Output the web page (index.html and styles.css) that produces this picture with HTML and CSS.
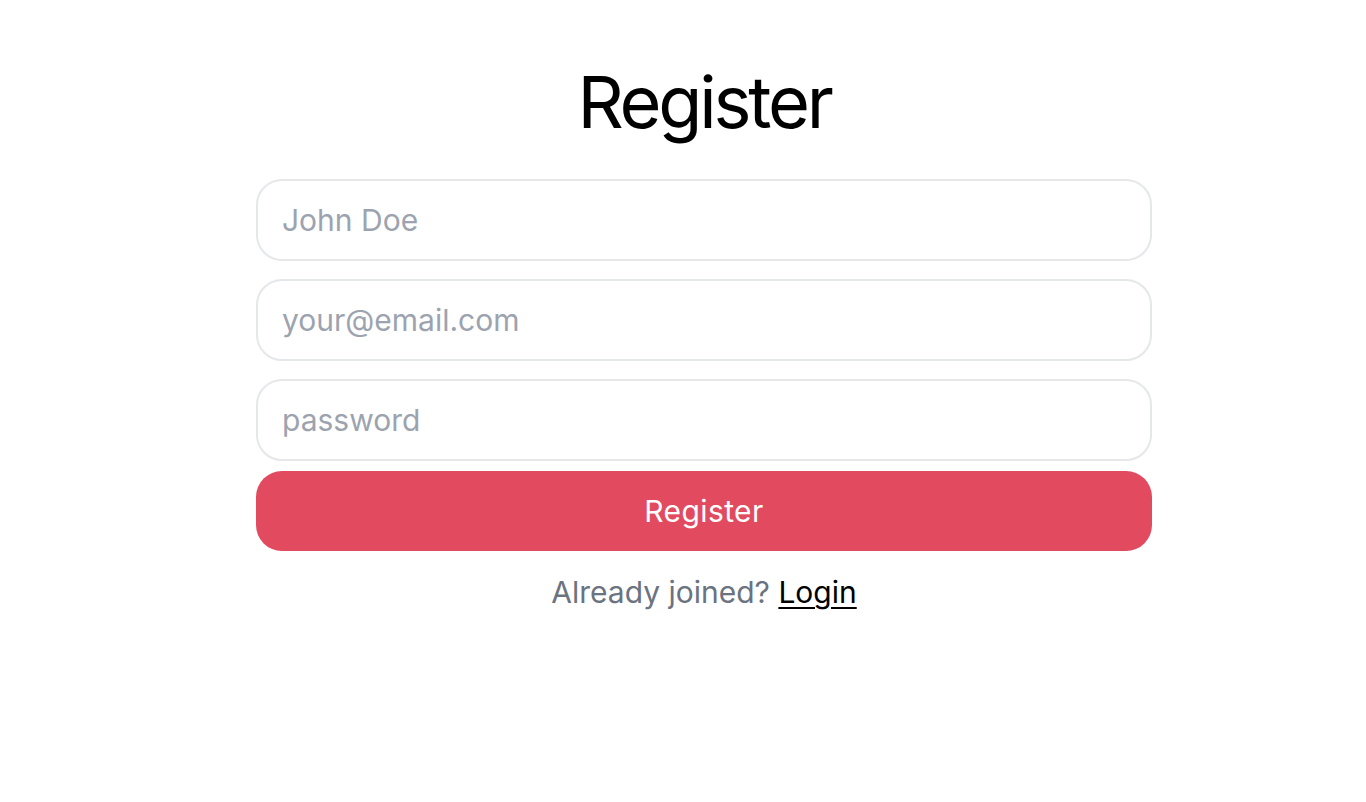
FILE: index.html
```html
<!DOCTYPE html>
<html lang="en">
<head>
<meta charset="utf-8">
<title>Register</title>
<link rel="stylesheet" href="styles.css">
</head>
<body>
<main class="page">
  <h1 class="title">Register</h1>
  <form class="form">
    <input class="field" type="text" placeholder="John Doe">
    <input class="field" type="email" placeholder="your@email.com">
    <input class="field" type="password" placeholder="password">
    <button class="btn" type="button">Register</button>
  </form>
  <p class="switch">Already joined? <a class="link" href="#">Login</a></p>
</main>
</body>
</html>
```
FILE: styles.css
```css
* { box-sizing: border-box; }
html, body { margin: 0; padding: 0; background: #ffffff; }
body {
  font-family: Inter, "Liberation Sans", Arial, sans-serif;
  color: #000;
  padding-left: 42px;
}
.page {
  width: 896px;
  margin: 0 auto;
  display: flex;
  flex-direction: column;
  align-items: stretch;
}
.title {
  margin: 66px 0 0;
  font-size: 72px;
  line-height: 72px;
  font-weight: 400;
  text-align: center;
  letter-spacing: -3.2px;
}
.form {
  margin-top: 41px;
  display: flex;
  flex-direction: column;
}
.field {
  height: 82px;
  border: 2px solid #e5e7eb;
  border-radius: 26px;
  padding: 0 24px;
  font-family: inherit;
  font-size: 30px;
  color: #111;
  background: #fff;
  outline: none;
  margin-bottom: 18px;
}
.field:nth-of-type(3) { margin-bottom: 10px; }
.field::placeholder { color: #9ca3af; }
.btn {
  height: 80px;
  border: none;
  border-radius: 26px;
  background: #e24a5f;
  color: #fff;
  font-family: inherit;
  font-size: 30px;
  letter-spacing: 0.4px;
  cursor: pointer;
}
.switch {
  margin: 21px 0 0;
  text-align: center;
  font-size: 30px;
  line-height: 40px;
  color: #6b7280;
}
.link {
  color: #000;
  text-decoration: underline;
  text-underline-offset: 4px;
  text-decoration-thickness: 2px;
}
```
